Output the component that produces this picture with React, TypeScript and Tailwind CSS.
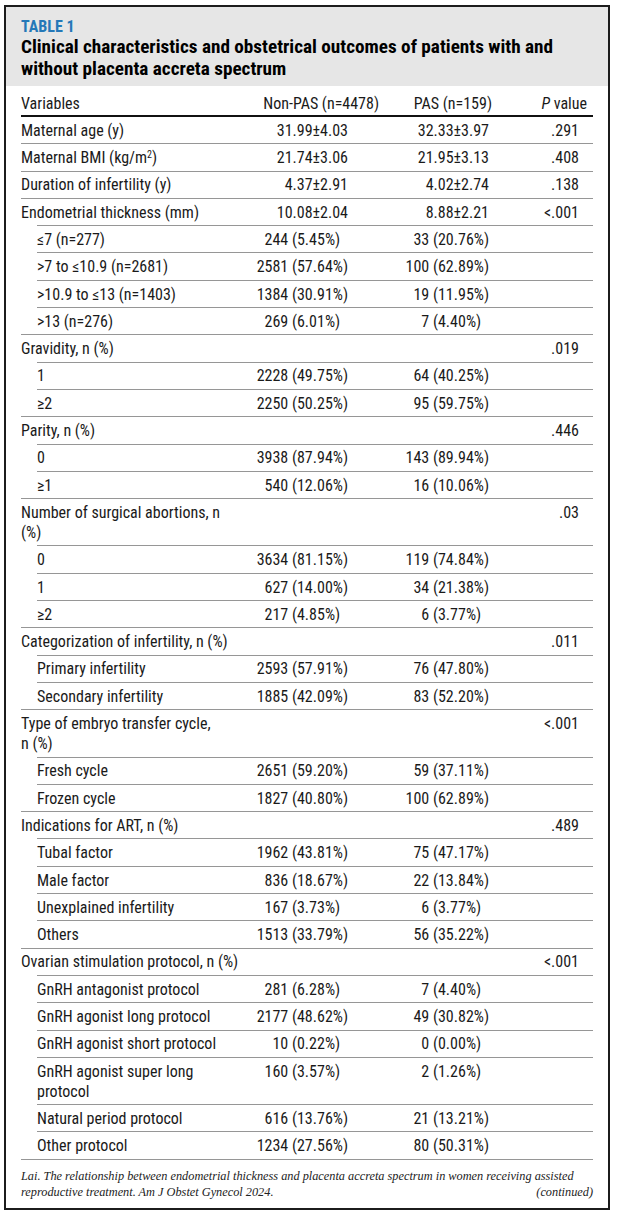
import React from "react";

type Row = {
  label: React.ReactNode;
  sub?: boolean;
  a?: string;
  b?: string;
  p?: string;
};

const rows: Row[] = [
  { label: "Maternal age (y)", a: "31.99±4.03", b: "32.33±3.97", p: ".291" },
  {
    label: (
      <>
        Maternal BMI (kg/m<sup className="text-[10px]">2</sup>)
      </>
    ),
    a: "21.74±3.06",
    b: "21.95±3.13",
    p: ".408",
  },
  { label: "Duration of infertility (y)", a: "4.37±2.91", b: "4.02±2.74", p: ".138" },
  { label: "Endometrial thickness (mm)", a: "10.08±2.04", b: "8.88±2.21", p: "<.001" },
  { label: "≤7 (n=277)", sub: true, a: "244 (5.45%)", b: "33 (20.76%)" },
  { label: ">7 to ≤10.9 (n=2681)", sub: true, a: "2581 (57.64%)", b: "100 (62.89%)" },
  { label: ">10.9 to ≤13 (n=1403)", sub: true, a: "1384 (30.91%)", b: "19 (11.95%)" },
  { label: ">13 (n=276)", sub: true, a: "269 (6.01%)", b: "7 (4.40%)" },
  { label: "Gravidity, n (%)", p: ".019" },
  { label: "1", sub: true, a: "2228 (49.75%)", b: "64 (40.25%)" },
  { label: "≥2", sub: true, a: "2250 (50.25%)", b: "95 (59.75%)" },
  { label: "Parity, n (%)", p: ".446" },
  { label: "0", sub: true, a: "3938 (87.94%)", b: "143 (89.94%)" },
  { label: "≥1", sub: true, a: "540 (12.06%)", b: "16 (10.06%)" },
  {
    label: (
      <>
        Number of surgical abortions, n<br />(%)
      </>
    ),
    p: ".03",
  },
  { label: "0", sub: true, a: "3634 (81.15%)", b: "119 (74.84%)" },
  { label: "1", sub: true, a: "627 (14.00%)", b: "34 (21.38%)" },
  { label: "≥2", sub: true, a: "217 (4.85%)", b: "6 (3.77%)" },
  { label: "Categorization of infertility, n (%)", p: ".011" },
  { label: "Primary infertility", sub: true, a: "2593 (57.91%)", b: "76 (47.80%)" },
  { label: "Secondary infertility", sub: true, a: "1885 (42.09%)", b: "83 (52.20%)" },
  {
    label: (
      <>
        Type of embryo transfer cycle,
        <br />n (%)
      </>
    ),
    p: "<.001",
  },
  { label: "Fresh cycle", sub: true, a: "2651 (59.20%)", b: "59 (37.11%)" },
  { label: "Frozen cycle", sub: true, a: "1827 (40.80%)", b: "100 (62.89%)" },
  { label: "Indications for ART, n (%)", p: ".489" },
  { label: "Tubal factor", sub: true, a: "1962 (43.81%)", b: "75 (47.17%)" },
  { label: "Male factor", sub: true, a: "836 (18.67%)", b: "22 (13.84%)" },
  { label: "Unexplained infertility", sub: true, a: "167 (3.73%)", b: "6 (3.77%)" },
  { label: "Others", sub: true, a: "1513 (33.79%)", b: "56 (35.22%)" },
  { label: "Ovarian stimulation protocol, n (%)", p: "<.001" },
  { label: "GnRH antagonist protocol", sub: true, a: "281 (6.28%)", b: "7 (4.40%)" },
  { label: "GnRH agonist long protocol", sub: true, a: "2177 (48.62%)", b: "49 (30.82%)" },
  { label: "GnRH agonist short protocol", sub: true, a: "10 (0.22%)", b: "0 (0.00%)" },
  {
    label: (
      <>
        GnRH agonist super long
        <br />
        protocol
      </>
    ),
    sub: true,
    a: "160 (3.57%)",
    b: "2 (1.26%)",
  },
  { label: "Natural period protocol", sub: true, a: "616 (13.76%)", b: "21 (13.21%)" },
  { label: "Other protocol", sub: true, a: "1234 (27.56%)", b: "80 (50.31%)" },
];

// counts line up on the "(": the percent sits in a box as wide as "(00.00%)"
const Value: React.FC<{ v?: string; pad: string }> = ({ v, pad }) => {
  if (!v) return <div />;
  if (v.includes("±")) {
    return <div className={`${pad} text-right whitespace-nowrap`}>{v}</div>;
  }
  const i = v.indexOf(" ");
  return (
    <div className={`${pad} flex justify-end whitespace-nowrap`}>
      <span>{v.slice(0, i)}</span>
      <span className="grid">
        <span className="col-start-1 row-start-1 invisible">&nbsp;(00.00%)</span>
        <span className="col-start-1 row-start-1">&nbsp;{v.slice(i + 1)}</span>
      </span>
    </div>
  );
};

const cols = "grid grid-cols-[229px_140px_110px_93px]";

export default function App() {
  return (
    <div className="bg-white min-h-[1220px] pt-[5px] pl-[4px]">
      <div className="w-[606px] border-2 border-[#1c1c1c] text-[#1a1a1a] font-['Roboto_Condensed','Roboto',sans-serif]">
        <div className="bg-[#e6e6e6] px-[15px] pt-[11px] pb-[6px]">
          <div className="text-[16px] leading-[18px] font-bold text-[#2478b8]">TABLE 1</div>
          <div className="text-[19.2px] leading-[22px] font-bold text-black">
            Clinical characteristics and obstetrical outcomes of patients with and
            <br />
            without placenta accreta spectrum
          </div>
        </div>

        <div className="px-[15px] text-[16px] leading-[20px]">
          <div className={`${cols} pt-[8px] pb-[1px] whitespace-nowrap`}>
            <div>Variables</div>
            <div className="text-right pr-[11px]">Non-PAS (n=4478)</div>
            <div className="text-right pr-[8px]">PAS (n=159)</div>
            <div className="text-right pr-[6px]">
              <span className="italic">P</span> value
            </div>
          </div>
          <div className="h-[2px] bg-[#111]" />

          {rows.map((r, idx) => {
            const next = rows[idx + 1];
            return (
              <React.Fragment key={idx}>
                <div className={`${cols} pt-[3.8px] pb-[2.5px]`}>
                  <div className={`whitespace-nowrap ${r.sub ? "pl-[16px]" : ""}`}>{r.label}</div>
                  <Value v={r.a} pad="pr-[42px]" />
                  <Value v={r.b} pad="pr-[11px]" />
                  <div className="text-right pr-[14px]">{r.p}</div>
                </div>
                <div className={`h-px bg-[#969696] ${next && next.sub ? "ml-[16px]" : ""}`} />
              </React.Fragment>
            );
          })}
        </div>

        <div className="px-[15px] pt-[8px] pb-[8px] font-['Liberation_Serif',serif] italic text-[12.3px] leading-[16px] text-[#222]">
          <div>
            Lai. The relationship between endometrial thickness and placenta accreta spectrum in women receiving
            assisted
          </div>
          <div className="flex justify-between">
            <span>reproductive treatment. Am J Obstet Gynecol 2024.</span>
            <span>(continued)</span>
          </div>
        </div>
      </div>
    </div>
  );
}
